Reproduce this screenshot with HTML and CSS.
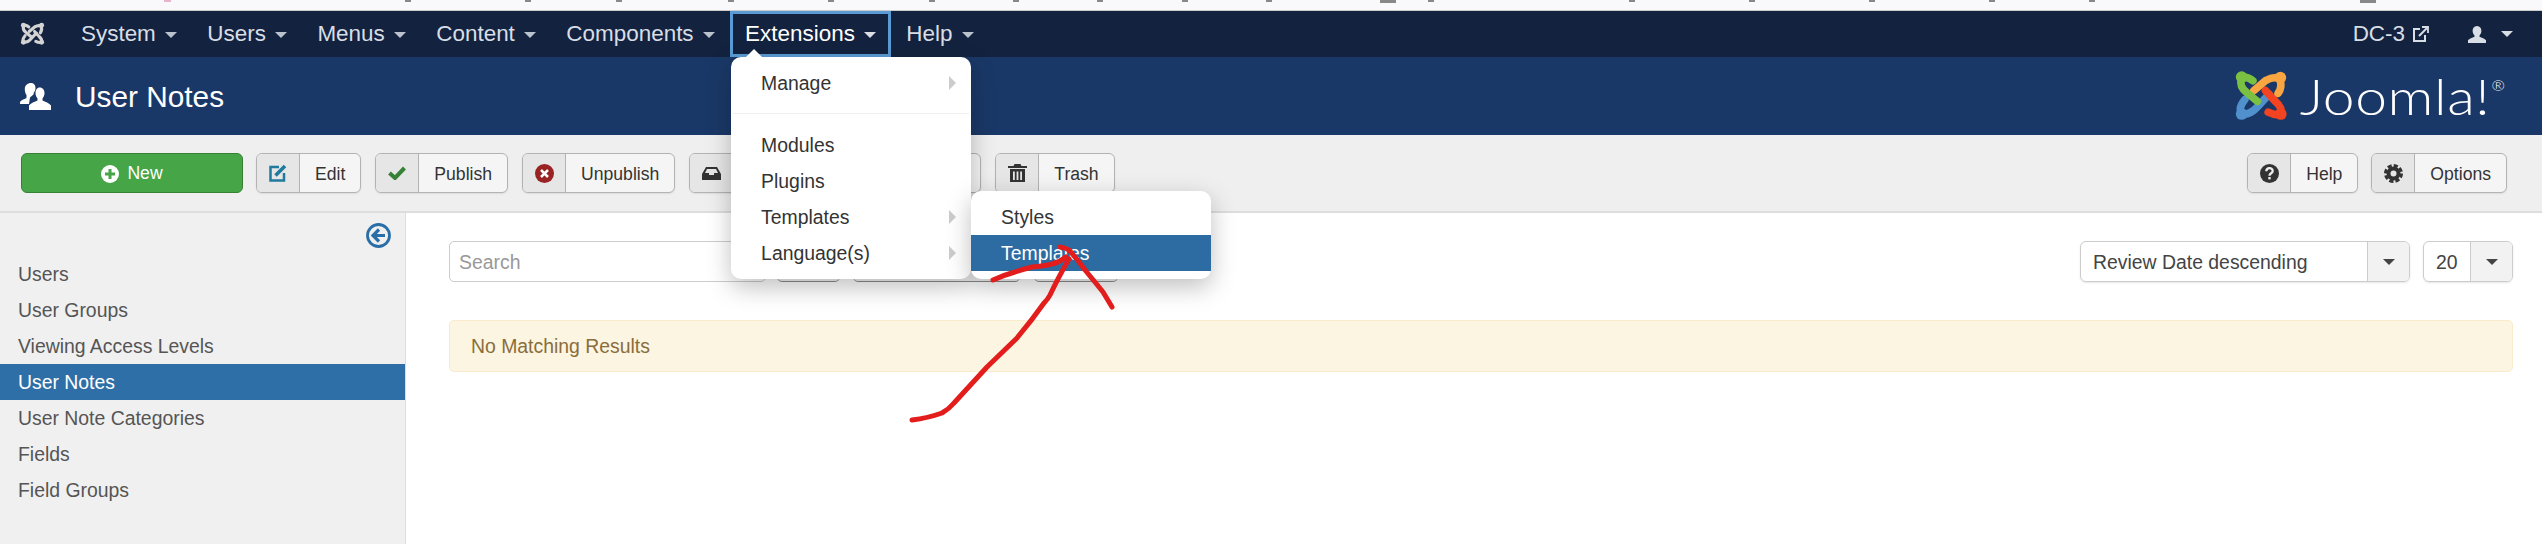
FILE: index.html
```html
<!DOCTYPE html>
<html lang="en">
<head>
	<meta charset="UTF-8">
	<title>User Notes</title>
	<link rel="stylesheet" href="styles.css">
</head>
<body>
	<div class="topstrip">
		<svg class="marks" width="2542" height="3" fill="#888">
			<rect x="164" y="0" width="7" height="2" fill="#e8b4cc"/>
			<rect x="405" y="0" width="6" height="2"/><rect x="525" y="0" width="6" height="2"/>
			<rect x="616" y="0" width="6" height="2"/><rect x="728" y="0" width="6" height="2"/>
			<rect x="828" y="0" width="6" height="2"/><rect x="929" y="0" width="6" height="2"/>
			<rect x="1013" y="0" width="6" height="2"/><rect x="1097" y="0" width="6" height="2"/>
			<rect x="1182" y="0" width="6" height="2"/><rect x="1266" y="0" width="6" height="2"/>
			<rect x="1380" y="0" width="16" height="3"/><rect x="1428" y="0" width="6" height="2"/>
			<rect x="1629" y="0" width="6" height="2"/><rect x="1749" y="0" width="6" height="2"/>
			<rect x="1869" y="0" width="6" height="2"/><rect x="1989" y="0" width="6" height="2"/>
			<rect x="2089" y="0" width="6" height="2"/><rect x="2360" y="0" width="16" height="3"/>
		</svg>
	</div>

	<nav class="navbar">
		<a class="brand">
			<svg width="25" height="24" viewBox="4 3 60 58" fill="#d4d4d4" stroke="#d4d4d4" stroke-width="7.5" stroke-linecap="round">
				<g fill="none">
					<path d="M43 30 30 44Q22 53 13 52Q8 46 16 36"/>
					<path d="M39 26 50 38Q58 45 56 52Q50 54 42 50"/>
					<path d="M26 26 39 15Q50 9 55 14Q58 22 53 29"/>
					<path d="M25 15Q16 8 12 14Q10 22 18 28L30 38"/>
				</g>
				<circle cx="12" cy="11" r="6" stroke="none"/><circle cx="56" cy="11" r="6" stroke="none"/>
				<circle cx="12" cy="52" r="6" stroke="none"/><circle cx="56" cy="52" r="6" stroke="none"/>
			</svg>
		</a>
		<ul class="menu">
			<li>System<i class="caret"></i></li>
			<li>Users<i class="caret"></i></li>
			<li>Menus<i class="caret"></i></li>
			<li>Content<i class="caret"></i></li>
			<li>Components<i class="caret"></i></li>
			<li class="open">Extensions<i class="caret"></i>
				<ul class="dropdown">
					<li class="has-sub">Manage</li>
					<li class="divider"></li>
					<li>Modules</li>
					<li>Plugins</li>
					<li class="has-sub">Templates
						<ul class="submenu">
							<li>Styles</li>
							<li class="active">Templates</li>
						</ul>
					</li>
					<li class="has-sub">Language(s)</li>
				</ul>
			</li>
			<li>Help<i class="caret"></i></li>
		</ul>
		<div class="nav-right">
			<span class="site">DC-3
				<svg width="17" height="16" viewBox="0 0 17 16" fill="none" stroke="#d8dee6" stroke-width="2">
					<path d="M8 3H2v12h11V9"/><path d="M7 10 15 2"/><path d="M10 1h6v6" stroke-width="1.8"/>
				</svg>
			</span>
			<span class="account">
				<svg width="18" height="17" viewBox="0 0 18 17" fill="#d8dee6">
					<path d="M9 0c3 0 4.4 2.2 4.4 4.8 0 2-.9 3.7-1.900 4.700v1.300c2 .9 5.500 2 6.500 3.500V17H0v-2.700c1-1.500 4.500-2.600 6.500-3.500V9.500C5.500 8.500 4.600 6.800 4.600 4.800 4.600 2.200 6 0 9 0z"/>
				</svg>
				<i class="caret"></i>
			</span>
		</div>
	</nav>

	<header class="subhead">
		<svg class="page-icon" width="31" height="27" viewBox="0 0 31 27" fill="#fff">
			<path d="M11 0c3 0 4.500 2.300 4.500 5 0 2-.7 3.500-1.800 4.700v1.500L10 14.500 9 21H0v-2c1-1.700 4-2.700 6.500-4v-3C5.300 10.500 4.800 8.300 4.800 6 4.800 2.500 7.500 0 11 0z"/>
			<path d="M19.500 4.500c3.400 0 5 2.600 5 5.600 0 2.200-.8 4-2 5.300v2c2.500 1.300 7 2.600 8.500 5.100V27H9v-4.500c1.500-2.500 6-3.800 8.500-5.100v-2c-1.200-1.300-2-3.100-2-5.300 0-3 1.600-5.600 4-5.600z"/>
		</svg>
		<h1>User Notes</h1>
		<div class="joomla">
			<svg width="54" height="54" viewBox="4 3 60 58" fill="none" stroke-width="8.5" stroke-linecap="round">
				<g stroke="#5091cd" fill="#5091cd">
					<path d="M43 30 30 44Q22 53 13 52Q8 46 16 36" fill="none"/>
					<circle cx="12.5" cy="52" r="6.5" stroke="none"/>
				</g>
				<g stroke="#f44321" fill="#f44321">
					<path d="M39 26 50 38Q58 45 56 52Q50 54 42 50" fill="none"/>
					<circle cx="56" cy="52" r="6.5" stroke="none"/>
				</g>
				<g stroke="#f9a541" fill="#f9a541">
					<path d="M26 26 39 15Q50 9 55 14Q58 22 53 29" fill="none"/>
					<circle cx="55.5" cy="11.5" r="6.5" stroke="none"/>
				</g>
				<g stroke="#7ac143" fill="#7ac143">
					<path d="M25 15Q16 8 12 14Q10 22 18 28L30 38" fill="none"/>
					<circle cx="12.5" cy="11" r="6.5" stroke="none"/>
				</g>
			</svg>
			<span class="wordmark">Joomla!<sup>®</sup></span>
		</div>
	</header>

	<div class="toolbar">
		<button class="btn-new">
			<svg width="18" height="18" viewBox="0 0 18 18"><circle cx="9" cy="9" r="9" fill="#fff"/><path d="M9 4v10M4 9h10" stroke="#46a546" stroke-width="3"/></svg>
			New
		</button>
		<div class="btn"><span class="btn-icon">
			<svg width="18" height="18" viewBox="0 0 18 18" fill="none" stroke="#1f7a9e" stroke-width="2.5"><path d="M10 3H1.500v13.500H15V9"/><path d="M6.500 11.500 16 2" stroke-width="3.5"/></svg>
		</span><span class="btn-label">Edit</span></div>
		<div class="btn"><span class="btn-icon">
			<svg width="18" height="14" viewBox="0 0 18 14" fill="none" stroke="#378137" stroke-width="4"><path d="M1.500 7 7 12 16.500 2"/></svg>
		</span><span class="btn-label">Publish</span></div>
		<div class="btn"><span class="btn-icon">
			<svg width="19" height="19" viewBox="0 0 19 19"><circle cx="9.5" cy="9.5" r="9.5" fill="#992222"/><path d="M6 6l7 7M13 6l-7 7" stroke="#fff" stroke-width="2.5"/></svg>
		</span><span class="btn-label">Unpublish</span></div>
		<div class="btn btn-archive"><span class="btn-icon">
			<svg width="19" height="13" viewBox="0 0 19 13" fill="#333"><path d="M4 0h11l4 7v6H0V7zM5 2 3 6h4v2h5V6h4l-2-4z"/></svg>
		</span></div>
		<div class="btn btn-checkin"><span class="btn-icon"></span></div>
		<div class="btn"><span class="btn-icon">
			<svg width="19" height="18" viewBox="0 0 19 18" fill="#333"><path d="M6.500 0h6l1 2H19v2H0V2h5.500zM2 5h15v13H2zm3 2.500V16h1.800V7.500zm3.600 0V16h1.800V7.500zm3.600 0V16H14V7.500z" fill-rule="evenodd"/></svg>
		</span><span class="btn-label">Trash</span></div>
		<div class="toolbar-right">
			<div class="btn"><span class="btn-icon">
				<svg width="19" height="19" viewBox="0 0 19 19"><circle cx="9.5" cy="9.5" r="9.5" fill="#333"/><path d="M6.300 7.300c0-4.200 6.400-4.200 6.400-.3 0 2.300-3.200 2.200-3.200 4.700" fill="none" stroke="#eee" stroke-width="2.3"/><rect x="8.3" y="13" width="2.4" height="2.4" fill="#eee"/></svg>
			</span><span class="btn-label">Help</span></div>
			<div class="btn"><span class="btn-icon">
				<svg width="19" height="19" viewBox="0 0 19 19" fill="none" stroke="#333"><circle cx="9.5" cy="9.5" r="5" stroke-width="4"/><circle cx="9.5" cy="9.5" r="8" stroke-width="3" stroke-dasharray="4.2 2.08"/></svg>
			</span><span class="btn-label">Options</span></div>
		</div>
	</div>

	<div class="layout">
		<aside class="sidebar">
			<div class="collapse">
				<svg width="25" height="25" viewBox="0 0 25 25" fill="none" stroke="#2a6ea8"><circle cx="12.5" cy="12.5" r="11" stroke-width="2.8"/><path d="M19 12.500H8M13 6.500l-6 6 6 6" stroke-width="3.2"/></svg>
			</div>
			<ul class="side-list">
				<li>Users</li>
				<li>User Groups</li>
				<li>Viewing Access Levels</li>
				<li class="active">User Notes</li>
				<li>User Note Categories</li>
				<li>Fields</li>
				<li>Field Groups</li>
			</ul>
		</aside>
		<main class="content">
			<div class="filters">
				<input class="search" type="text" placeholder="Search">
				<span class="fbtn fbtn-search"></span>
				<span class="fbtn fbtn-tools"></span>
				<span class="fbtn fbtn-clear"></span>
				<div class="select select-sort"><span>Review Date descending</span><b><i class="caret"></i></b></div>
				<div class="select select-limit"><span>20</span><b><i class="caret"></i></b></div>
			</div>
			<div class="alert">No Matching Results</div>
		</main>
	</div>

	<!-- hand drawn arrow over the page -->
	<svg class="scribble" width="2542" height="544" fill="none" stroke="#e31c1c" stroke-width="5" stroke-linecap="round" stroke-linejoin="round">
		<path d="M912 420Q928 418 942 413Q949 409 954 403L987 367L1017 338Q1032 320 1044 303Q1048 299 1050 295Q1058 278 1069 259"/>
		<path d="M1060 247Q1066 248 1069 250Q1077 259 1085 270Q1095 282 1103 292L1112 307"/>
		<path d="M993 280Q1004 275 1015 272Q1024 269 1032 267Q1044 266 1052 264Q1060 262 1066 257"/>
	</svg>
</body>
</html>
```

FILE: styles.css
```css
*{box-sizing: border-box;}
html,body{margin: 0;height: 544px;overflow: hidden;}
body{font-family: "Liberation Sans", Arial, sans-serif;font-size: 19.4px;color: #333;background: #fff;position: relative;}
ul{list-style: none;margin: 0;padding: 0;}

.topstrip{height: 11px;background: #f9f9fb;border-bottom: 1px solid #ccc;}
.marks{display: block;}

.caret{display: inline-block;width: 0;height: 0;margin-left: 9.5px;vertical-align: middle;
	border-top: 6px solid currentColor;border-left: 6px solid transparent;border-right: 6px solid transparent;}

/* navbar */
.navbar{height: 46px;background: #13233f;color: #d8dee6;font-size: 22.45px;display: flex;align-items: center;}
.brand{width: 66px;padding-left: 20px;display: flex;}
.menu{display: flex;height: 100%;}
.menu > li{padding: 0 15px;line-height: 45px;position: relative;white-space: nowrap;}
.menu > li .caret{opacity: .85;}
.menu > li.open{color: #fff;box-shadow: inset 0 0 0 3px #5b9bd5;}
.nav-right{margin-left: auto;padding-right: 29px;display: flex;align-items: center;}
.site{display: flex;align-items: center;gap: 7px;margin-right: 39px;}
.account{display: flex;align-items: center;}
.account .caret{margin-left: 15px;}

/* extensions menu */
.dropdown,.submenu{position: absolute;background: #fff;color: #333;font-size: 19.4px;line-height: 37px;
	padding: 8px 0;border-radius: 10px;z-index: 10;box-shadow: 0 8px 24px rgba(0,0,0,.25);}
.dropdown{left: 1px;top: 46px;width: 240px;}
.dropdown::before{content: "";position: absolute;left: 15px;top: -8px;
	border-bottom: 8px solid #fff;border-left: 8px solid transparent;border-right: 8px solid transparent;}
.dropdown li,.submenu li{padding-left: 30px;height: 36px;position: relative;}
.dropdown li.divider{height: 1px;padding: 0;margin: 12px 2px 13px;background: #eee;}
.has-sub::after{content: "";position: absolute;left: 218px;top: 11px;
	border-left: 7px solid #ccc;border-top: 7px solid transparent;border-bottom: 7px solid transparent;}
.submenu{left: 240px;top: -8px;width: 240px;}
.submenu li.active{background: #2d6ca2;color: #fff;}

/* page title */
.subhead{height: 78px;background: #1a3867;color: #fff;display: flex;align-items: center;padding: 0 36px 0 20px;}
.page-icon{margin-right: 24px;}
.subhead h1{margin: 2px 0 0;font-size: 29.8px;font-weight: normal;}
.joomla{margin-left: auto;display: flex;align-items: center;}
.wordmark{font-family: Lato, sans-serif;font-weight: 300;font-size: 50px;margin-left: 37px;line-height: 1;letter-spacing: .5px;
	transform: scaleX(1.14);transform-origin: right center;}
.wordmark sup{font-size: 14px;vertical-align: 24px;line-height: 0;margin-left: 1px;}

/* toolbar */
.toolbar{height: 78px;background: #efefef;border-bottom: 2px solid #ddd;padding: 18px 35px 0 21px;display: flex;align-items: flex-start;gap: 14px;
	font-size: 17.6px;}
.btn-new{width: 222px;height: 40px;margin-right: -1px;padding-top: 2px;background: #46a546;border: 1px solid #378137;border-radius: 6px;color: #fff;
	font: inherit;display: flex;align-items: center;justify-content: center;gap: 8px;}
.btn{height: 40px;display: flex;border: 1px solid #b3b3b3;border-radius: 6px;background: #f5f5f5;overflow: hidden;box-shadow: 0 1px 2px rgba(0,0,0,.08);}
.btn-icon{width: 43px;background: #e6e6e6;border-right: 1px solid #b3b3b3;display: flex;align-items: center;justify-content: center;}
.btn-label{padding: 0 15px;line-height: 40px;}
.btn-archive{width: 144px;}
.btn-checkin{width: 134px;}
.toolbar-right{margin-left: auto;display: flex;gap: 13px;}

/* sidebar + content */
.layout{display: flex;height: 331px;}
.sidebar{width: 406px;flex: none;background: #f0f0f0;border-right: 1px solid #ddd;}
.collapse{height: 43px;padding: 10px 14px 0 0;display: flex;justify-content: flex-end;}
.side-list li{height: 36px;line-height: 37px;padding-left: 18px;color: #555;}
.side-list li.active{background: #2f6fa7;color: #fff;}

.content{flex: 1;padding: 28px 29px 0 43px;}
.filters{display: flex;height: 41px;margin-bottom: 38px;}
.search{width: 317px;height: 41px;border: 1px solid #ccc;border-radius: 5px;padding: 2px 9px 0;font: inherit;margin-right: 11px;}
.search::placeholder{color: #999;}
.fbtn{height: 41px;background: #f5f5f5;border: 1px solid #b3b3b3;border-bottom-color: #8c8c8c;border-radius: 5px;}
.fbtn-search{width: 63px;margin-right: 13px;}
.fbtn-tools{width: 167px;margin-right: 14px;}
.fbtn-clear{width: 84px;}
.select{height: 41px;display: flex;border: 1px solid #ccc;border-radius: 6px;overflow: hidden;box-shadow: 0 1px 2px rgba(0,0,0,.1);color: #444;}
.select span{flex: 1;padding-left: 12px;line-height: 41px;white-space: nowrap;}
.select b{width: 42px;background: #f2f2f2;border-left: 1px solid #ccc;display: flex;align-items: center;justify-content: center;}
.select .caret{margin: 0;border-top-color: #444;}
.select-sort{width: 330px;margin-left: auto;margin-right: 13px;}
.select-limit{width: 90px;}
.alert{height: 52px;line-height: 51px;padding-left: 21px;background: #fcf5e1;border: 1px solid #faebcc;border-radius: 5px;color: #8a6d3b;}

.scribble{position: absolute;left: 0;top: 0;z-index: 20;pointer-events: none;}
```
